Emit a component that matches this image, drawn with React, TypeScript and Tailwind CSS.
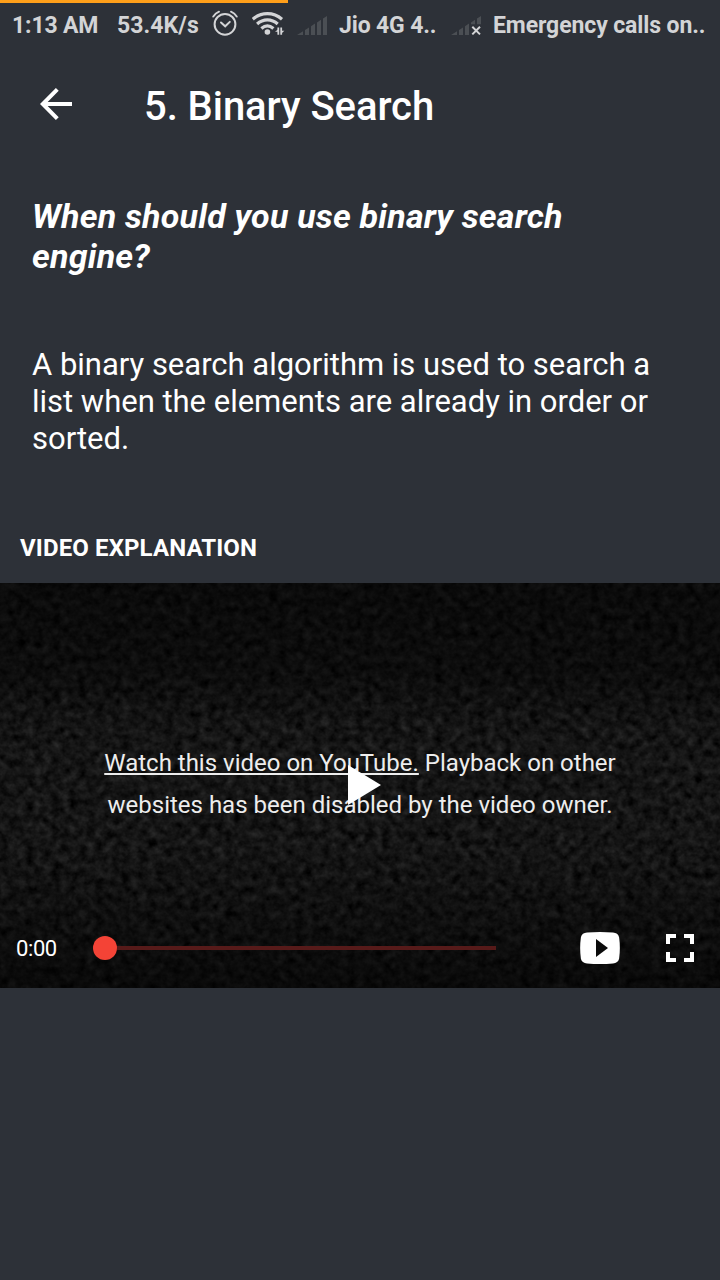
import React from 'react';

function AlarmIcon() {
  return (
    <svg className="h-[26px] w-[26px] shrink-0" viewBox="0 0 26 26" fill="none" stroke="#d3d4d6" strokeLinecap="round">
      <circle cx="13" cy="14.3" r="10.4" strokeWidth="2" />
      <path d="M1.3 6.6C2.8 4.3 4.5 2.8 7 1.7M24.7 6.6C23.2 4.3 21.5 2.8 19 1.7" strokeWidth="1.9" />
      <path d="M9 12.5l4.2 3.8 4.6-4.4" strokeWidth="2" />
    </svg>
  );
}

function WifiIcon() {
  return (
    <svg className="h-[26px] w-[33px] shrink-0" viewBox="0 0 33 26" fill="none" stroke="#d3d4d6">
      <path d="M.8 8.2C9.4.8 21.4.8 30 8.2" strokeWidth="3.2" />
      <path d="M5.1 13C11.2 7.5 19.6 7.5 25.7 13" strokeWidth="3.2" />
      <path d="M9.4 17.5C13.2 14.1 17.6 14.1 21.4 17.5" strokeWidth="3.2" />
      <circle cx="15.4" cy="21" r="2.8" fill="#d3d4d6" stroke="none" />
      <path d="M26.3 16.6v7.2M29.2 16.6v7.2" strokeWidth="1.8" />
      <path d="M26 18.4l-3 2.4h3zM29.4 22.4l3-2.6h-3z" fill="#d3d4d6" stroke="none" />
    </svg>
  );
}

function SignalIcon({ off = false }: { off?: boolean }) {
  return (
    <svg className="h-[22px] w-8 shrink-0" viewBox="0 0 32 22" fill="#4b4f54">
      <path d="M0 21l6-3.8V21zM8 16l4-2.6V21H8zM14 12.2l4-2.6V21h-4z" />
      {off ? (
        <>
          <path d="M20 8.4l4-2.6v4.4h-4zM26 4.6L30 2v8.2h-4z" />
          <path d="M21.3 12.7l7.7 7.7M29 12.7l-7.7 7.7" stroke="#d3d4d6" strokeWidth="2" />
        </>
      ) : (
        <path d="M20 8.4l4-2.6V21h-4zM26 4.6L30 2v19h-4z" />
      )}
    </svg>
  );
}

function StatusBar() {
  return (
    <div className="flex h-[47px] items-start whitespace-nowrap pl-3 pt-[9px] text-[23px] leading-[34px] font-bold tracking-[-0.15px] text-[#d3d4d6]">
      <span className="w-[105px]">1:13 AM</span>
      <span className="w-[95px] tracking-[0.08px]">53.4K/s</span>
      <div className="mt-[1px] w-[40px]"><AlarmIcon /></div>
      <div className="mt-[2px] w-[45px]"><WifiIcon /></div>
      <div className="mt-[5px] w-[42px]"><SignalIcon /></div>
      <span className="w-[112px]">Jio 4G 4..</span>
      <div className="mt-[5px] w-[42px]"><SignalIcon off /></div>
      <span className="tracking-[-0.1px]">Emergency calls on..</span>
    </div>
  );
}

function Header() {
  return (
    <header className="flex h-[117px] items-center pl-10">
      <svg className="mb-1 h-8 w-8" viewBox="0 0 32 32" fill="none" stroke="white" strokeWidth="4">
        <path d="M32 16H3M17.3 1.4L2.8 16l14.5 14.6" />
      </svg>
      <h1 className="ml-[72px] mt-[2px] text-[40px] leading-[48px] font-medium tracking-[-0.07px]">5. Binary Search</h1>
    </header>
  );
}

function Player() {
  return (
    <div className="relative flex h-[405px] flex-col overflow-hidden bg-black">
      <svg className="absolute inset-0 h-full w-full" aria-hidden="true">
        <defs>
          <filter id="static" x="0" y="0" width="100%" height="100%" colorInterpolationFilters="sRGB">
            <feTurbulence type="fractalNoise" baseFrequency="0.115 0.125" numOctaves="3" seed="8" />
            <feColorMatrix values="0.14 0.14 0 0 -0.06  0.14 0.14 0 0 -0.06  0.14 0.14 0 0 -0.06  0 0 0 0 1" />
            <feGaussianBlur stdDeviation="0.6" />
          </filter>
          <linearGradient id="shade" x2="0" y2="1">
            <stop offset="0" stopOpacity=".5" />
            <stop offset=".22" stopOpacity=".4" />
            <stop offset=".36" stopOpacity="0" />
            <stop offset=".65" stopOpacity="0" />
            <stop offset="1" stopOpacity=".55" />
          </linearGradient>
        </defs>
        <rect width="720" height="405" filter="url(#static)" />
        <rect width="720" height="405" fill="url(#shade)" />
      </svg>
      <div className="relative mt-[159px] text-center text-[24px] leading-[42px] text-[#ededed]">
        <p><a className="underline decoration-2 underline-offset-[2px] [text-decoration-skip-ink:none]">Watch this video on YouTube.</a> Playback on other</p>
        <p>websites has been disabled by the video owner.</p>
      </div>
      <svg className="absolute left-[348px] top-[182px] h-10 w-[33px]" viewBox="0 0 33 40" fill="white">
        <path d="M0 0l33 20L0 40z" />
      </svg>
      <div className="relative mt-[82px] flex h-[80px] items-center pl-4 text-[22px]">
        <span className="w-[77px] tracking-[-0.4px]">0:00</span>
        <span className="h-6 w-6 rounded-full bg-[#f44336]" />
        <span className="h-1 w-[379px] bg-[#561a19]" />
        <svg className="ml-[84px] h-8 w-10" viewBox="0 0 40 32">
          <path d="M7 .6Q20-.4 33 .6Q38 .9 39.1 5.2Q40.6 16 39.1 26.8Q38 31.1 33 31.4Q20 32.4 7 31.4Q2 31.1.9 26.8Q-.6 16 .9 5.2Q2 .9 7 .6Z" fill="white" />
          <path d="M16 7l12 9-12 9z" fill="#0b0b0b" />
        </svg>
        <svg className="ml-[46px] h-7 w-7" viewBox="0 0 28 28" fill="none" stroke="white" strokeWidth="4">
          <path d="M2 10V2h8M18 2h8v8M26 18v8h-8M10 26H2v-8" />
        </svg>
      </div>
    </div>
  );
}

export default function App() {
  return (
    <div className="flex h-[1280px] w-[720px] flex-col overflow-hidden bg-[#2d3138] font-['Roboto','Noto_Sans',sans-serif] text-white">
      <div className="h-[3px] w-[288px] shrink-0 bg-[#ff9f1a]" />
      <div className="-mt-[3px]"><StatusBar /></div>
      <Header />
      <main className="px-8 pt-8">
        <h2 className="text-[34px] leading-[40px] font-bold tracking-[0.2px] italic">When should you use binary search<br />engine?</h2>
        <p className="mt-[70px] text-[31px] leading-[37px] tracking-[-0.01px]">A binary search algorithm is used to search a<br />list when the elements are already in order or<br />sorted.</p>
      </main>
      <h3 className="mt-[76px] pb-[20px] pl-5 text-[24px] leading-[30px] font-bold tracking-[0.12px]">VIDEO EXPLANATION</h3>
      <Player />
    </div>
  );
}
